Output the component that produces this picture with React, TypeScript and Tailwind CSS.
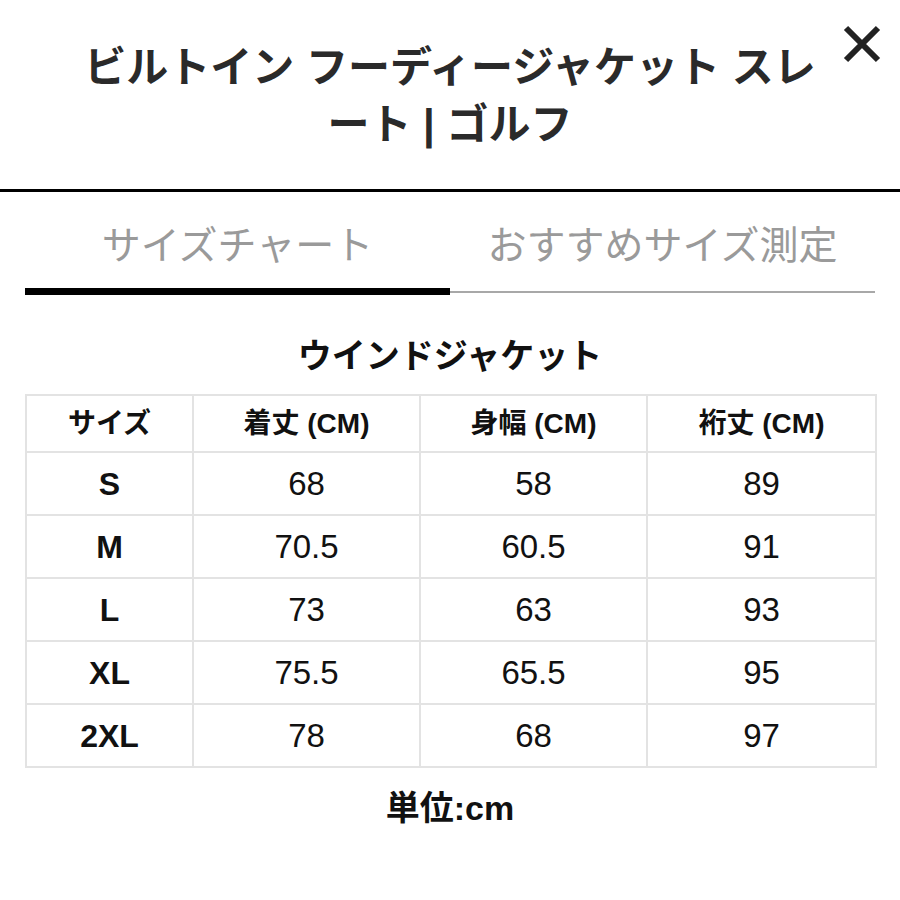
const rows = [
  { size: "S", length: "68", width: "58", sleeve: "89" },
  { size: "M", length: "70.5", width: "60.5", sleeve: "91" },
  { size: "L", length: "73", width: "63", sleeve: "93" },
  { size: "XL", length: "75.5", width: "65.5", sleeve: "95" },
  { size: "2XL", length: "78", width: "68", sleeve: "97" },
]

const jp = { fontFamily: '"Liberation Sans", "Noto Sans CJK JP", sans-serif' }

function CloseIcon() {
  return (
    <svg viewBox="0 0 40 40" className="h-[40px] w-[40px]" fill="none" stroke="#222" strokeWidth={6}>
      <path d="M4 4 L36 36 M36 4 L4 36" />
    </svg>
  )
}

export default function App() {
  return (
    <div className="h-[900px] w-[900px] overflow-hidden bg-white text-[#111]" style={jp}>
      <header className="relative h-[189px] pt-[39px]">
        <h1 className="mx-auto w-[748px] text-center text-[42px] font-bold leading-[57px] text-[#2a2a2a]">
          ビルトイン フーディージャケット スレート | ゴルフ
        </h1>
        <button className="absolute right-[18px] top-[24px]">
          <CloseIcon />
        </button>
      </header>
      <div className="h-[3px] bg-black" />

      <div className="mx-[25px] mt-[30px] grid grid-cols-2">
        <div className="flex flex-col items-center">
          <span className="pb-[18px] text-[39px] leading-[48px] text-[#9a9a9a]">サイズチャート</span>
          <div className="h-[7px] w-full bg-black" />
        </div>
        <div className="flex flex-col items-center">
          <span className="pb-[18px] text-[39px] leading-[48px] text-[#9a9a9a]">おすすめサイズ測定</span>
          <div className="mt-[3px] h-[2px] w-full bg-[#a8a8a8]" />
          <div className="h-[2px]" />
        </div>
      </div>

      <h2 className="mt-[39px] text-center text-[34px] font-bold leading-[44px]">ウインドジャケット</h2>

      <table className="mx-[25px] mt-[16px] w-[850px] table-fixed border-collapse">
        <colgroup>
          <col className="w-[167px]" />
          <col className="w-[227px]" />
          <col className="w-[227px]" />
          <col className="w-[229px]" />
        </colgroup>
        <thead>
          <tr className="h-[57px]">
            {["サイズ", "着丈 (CM)", "身幅 (CM)", "裄丈 (CM)"].map((h) => (
              <th key={h} className="border-2 border-[#e3e3e3] text-[28px] font-bold">
                {h}
              </th>
            ))}
          </tr>
        </thead>
        <tbody>
          {rows.map((r) => (
            <tr key={r.size} className="h-[63px]">
              <td className="border-2 border-[#e3e3e3] text-center text-[32px] font-bold">{r.size}</td>
              <td className="border-2 border-[#e3e3e3] text-center text-[33px]">{r.length}</td>
              <td className="border-2 border-[#e3e3e3] text-center text-[33px]">{r.width}</td>
              <td className="border-2 border-[#e3e3e3] text-center text-[33px]">{r.sleeve}</td>
            </tr>
          ))}
        </tbody>
      </table>

      <p className="mt-[18px] text-center text-[34px] font-bold leading-[44px]">単位:cm</p>
    </div>
  )
}
